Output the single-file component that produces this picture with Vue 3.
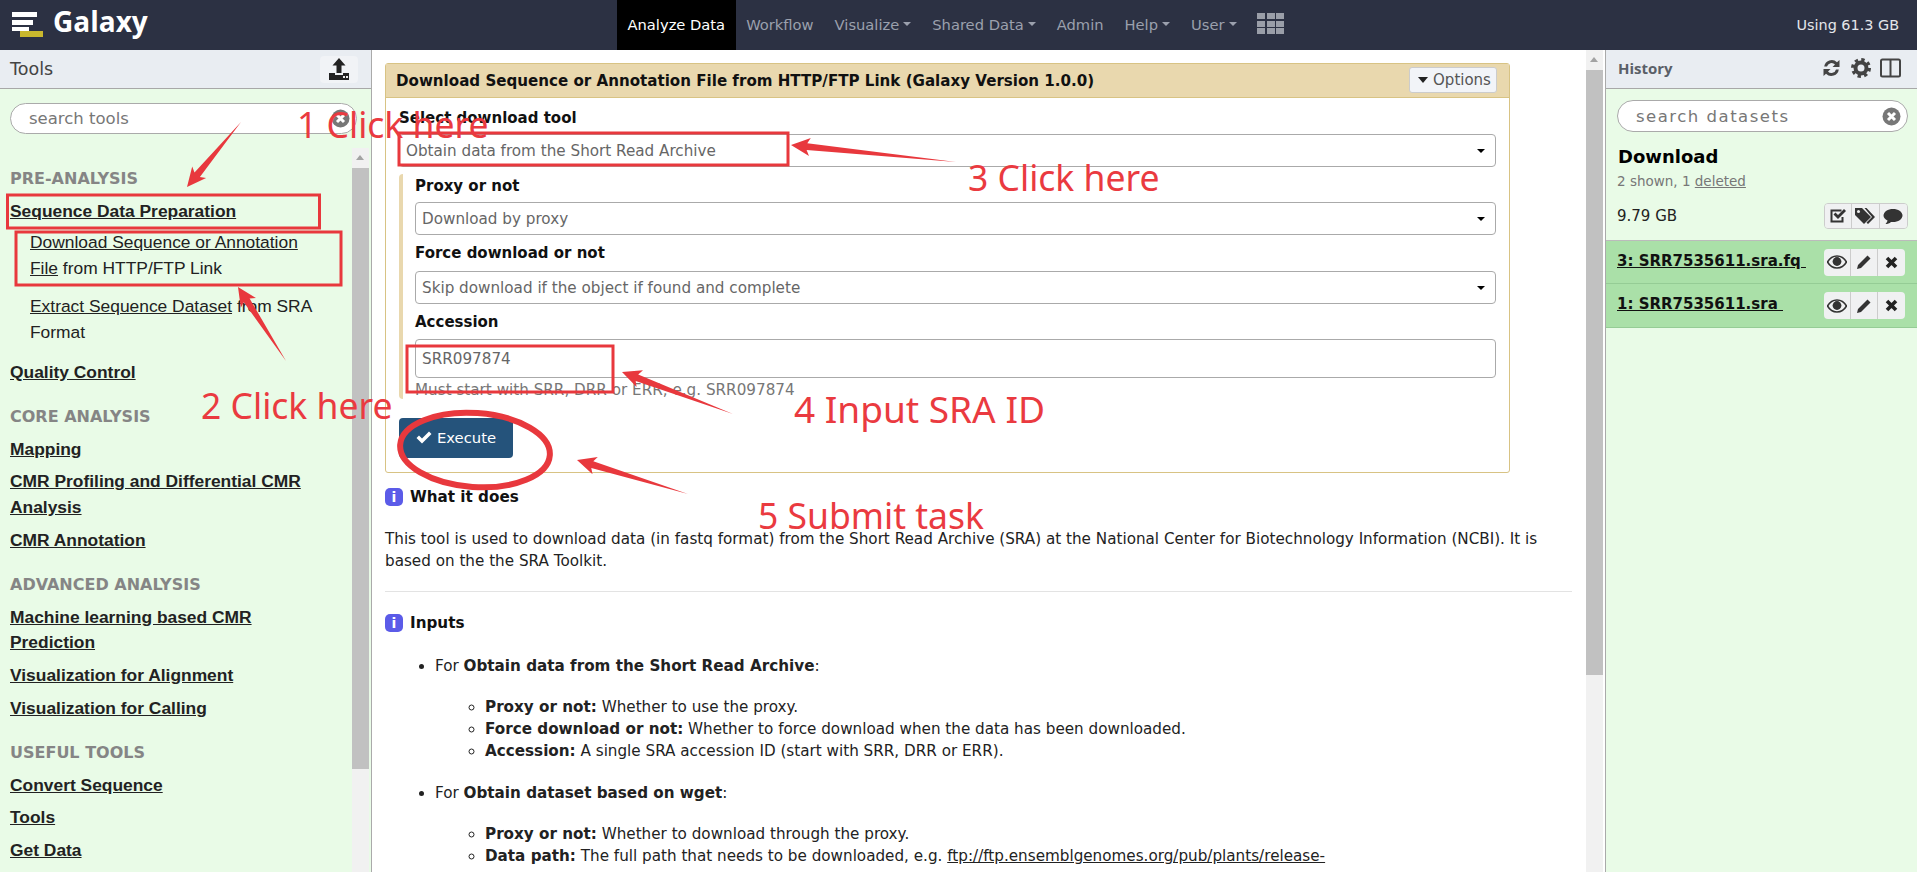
<script setup>
import { computed } from 'vue'

const navItems = [
  { label: 'Analyze Data', active: true },
  { label: 'Workflow' },
  { label: 'Visualize', caret: true },
  { label: 'Shared Data', caret: true },
  { label: 'Admin' },
  { label: 'Help', caret: true },
  { label: 'User', caret: true }
]

const toolGroups = [
  { title: 'PRE-ANALYSIS', items: ['Sequence Data Preparation'], open: true },
  { items: ['Quality Control'] },
  { title: 'CORE ANALYSIS', items: ['Mapping', 'CMR Profiling and Differential CMR Analysis', 'CMR Annotation'] },
  { title: 'ADVANCED ANALYSIS', items: ['Machine learning based CMR Prediction', 'Visualization for Alignment', 'Visualization for Calling'] },
  { title: 'USEFUL TOOLS', items: ['Convert Sequence', 'Tools', 'Get Data'] }
]

const grid = Array.from({ length: 9 }, (_, i) => i)

const marks = [
  { d: [7.5, 195, 312, 33] },
  { d: [16, 232, 325, 53] },
  { d: [399, 133, 389, 32] },
  { d: [407, 346, 206, 46] }
]

const rawArrows = [
  { tip: [187, 187], tail: [241, 122] },
  { tip: [238, 287], tail: [286, 361] },
  { tip: [791, 145], tail: [956, 162] },
  { tip: [622, 372], tail: [733, 414] },
  { tip: [577, 460], tail: [688, 494] }
]

// arrow shape: thin tail widening up to a barbed head
const arrows = computed(() =>
  rawArrows.map(({ tip, tail }) => {
    const dx = tail[0] - tip[0]
    const dy = tail[1] - tip[1]
    const len = Math.hypot(dx, dy)
    const ux = dx / len
    const uy = dy / len
    const at = (along, side) =>
      `${(tip[0] + ux * along - uy * side).toFixed(1)},${(tip[1] + uy * along + ux * side).toFixed(1)}`
    return [at(0, 0), at(19, 9), at(16, 3.5), tail.join(','), at(16, -3.5), at(19, -9)].join(' ')
  })
)

const notes = [
  { text: '1 Click here', cls: 'note-1' },
  { text: '2 Click here', cls: 'note-2' },
  { text: '3 Click here', cls: 'note-3' },
  { text: '4 Input SRA ID', cls: 'note-4' },
  { text: '5 Submit task', cls: 'note-5' }
]
</script>

<template>
  <div class="page">
    <header class="masthead">
      <div class="brand">
        <svg class="logo" width="32" height="26" viewBox="0 0 32 26">
          <rect x="0" y="0" width="25" height="5" fill="#fff" />
          <rect x="0" y="8" width="21" height="5" fill="#fff" />
          <rect x="0" y="15" width="17" height="4" fill="#fff" />
          <rect x="8" y="19" width="23" height="6" fill="#c9b82e" />
        </svg>
        <span class="brand-name">Galaxy</span>
      </div>
      <nav class="nav">
        <a v-for="item in navItems" :key="item.label" class="nav-item" :class="{ active: item.active }">
          {{ item.label }}<i v-if="item.caret" class="caret"></i>
        </a>
        <div class="apps">
          <i v-for="n in grid" :key="n"></i>
        </div>
      </nav>
      <div class="quota">Using 61.3 GB</div>
    </header>

    <div class="main">
      <aside class="tools">
        <div class="panel-head">
          <span class="panel-title">Tools</span>
          <button class="upload">
            <svg width="20" height="22" viewBox="0 0 20 22">
              <path d="M10 0l6.5 7.5H12.5V15h-5V7.500H3.500z" fill="#222" />
              <path d="M0 15h6v2h8v-2h6v7H0z" fill="#222" />
              <rect x="14" y="18" width="2" height="2" fill="#eee" />
              <rect x="17" y="18" width="2" height="2" fill="#eee" />
            </svg>
          </button>
        </div>
        <div class="tool-search">
          <div class="search-box">
            <span>search tools</span>
            <svg class="clear" width="19" height="19" viewBox="0 0 19 19">
              <circle cx="9.500" cy="9.500" r="9" fill="#777" />
              <path d="M6 6l7 7M13 6l-7 7" stroke="#fff" stroke-width="3" />
            </svg>
          </div>
        </div>
        <div class="tool-body">
          <div class="tool-list">
            <section v-for="(group, g) in toolGroups" :key="g" class="group">
              <div v-if="group.title" class="group-title">{{ group.title }}</div>
              <template v-for="item in group.items" :key="item">
                <a class="tool-link">{{ item }}</a>
                <div v-if="group.open" class="sub-list">
                  <div class="sub-item"><u>Download Sequence or Annotation File</u> from HTTP/FTP Link</div>
                  <div class="sub-item"><u>Extract Sequence Dataset</u> from SRA Format</div>
                </div>
              </template>
            </section>
          </div>
          <div class="scrollbar">
            <i class="up"></i>
            <b class="thumb thumb-left"></b>
          </div>
        </div>
      </aside>

      <main class="center">
        <div class="content">
          <div class="card">
            <div class="card-head">
              <span>Download Sequence or Annotation File from HTTP/FTP Link (Galaxy Version 1.0.0)</span>
              <button class="options"><i class="caret big"></i>Options</button>
            </div>
            <div class="card-body">
              <div class="label first">Select download tool</div>
              <div class="select">Obtain data from the Short Read Archive<i class="caret dark"></i></div>
              <div class="nested">
                <div class="label top">Proxy or not</div>
                <div class="select">Download by proxy<i class="caret dark"></i></div>
                <div class="label force">Force download or not</div>
                <div class="select">Skip download if the object if found and complete<i class="caret dark"></i></div>
                <div class="label accession">Accession</div>
                <div class="text-input">SRR097874</div>
                <div class="help">Must start with SRR, DRR or ERR, e.g. SRR097874</div>
              </div>
              <button class="execute">
                <svg width="16" height="13" viewBox="0 0 16 13">
                  <path d="M0.500 7l2.500-2.500 3 3L13 0.500l2.500 2.500L6 12.500z" fill="#fff" />
                </svg>
                Execute
              </button>
            </div>
          </div>

          <div class="help-head"><i class="info">i</i><strong>What it does</strong></div>
          <p class="para">
            This tool is used to download data (in fastq format) from the Short Read Archive (SRA) at the National Center for Biotechnology Information (NCBI). It is based on the the SRA Toolkit.
          </p>
          <hr class="rule" />
          <div class="help-head inputs"><i class="info">i</i><strong>Inputs</strong></div>
          <ul class="bullets">
            <li>
              For <strong>Obtain data from the Short Read Archive</strong>:
              <ul>
                <li><strong>Proxy or not:</strong> Whether to use the proxy.</li>
                <li><strong>Force download or not:</strong> Whether to force download when the data has been downloaded.</li>
                <li><strong>Accession:</strong> A single SRA accession ID (start with SRR, DRR or ERR).</li>
              </ul>
            </li>
            <li>
              For <strong>Obtain dataset based on wget</strong>:
              <ul>
                <li><strong>Proxy or not:</strong> Whether to download through the proxy.</li>
                <li class="nowrap"><strong>Data path:</strong> The full path that needs to be downloaded, e.g. <u>ftp://ftp.ensemblgenomes.org/pub/plants/release-</u></li>
              </ul>
            </li>
          </ul>
        </div>
        <div class="scrollbar center-bar">
          <i class="up"></i>
          <b class="thumb thumb-center"></b>
        </div>
      </main>

      <aside class="history">
        <div class="panel-head hist-head">
          <span class="hist-title">History</span>
          <div class="hist-icons">
            <svg width="21" height="20" viewBox="0 0 21 20">
              <path d="M3.200 8.500A7.500 7.500 0 0 1 16 4.300L18.500 2v7h-7l2.500-2.500A4.700 4.700 0 0 0 6 8.500z" fill="#444" />
              <path d="M17.800 11.500A7.500 7.500 0 0 1 5 15.700L2.500 18v-7h7L7 13.500a4.700 4.700 0 0 0 8 -2z" fill="#444" />
            </svg>
            <svg width="20" height="20" viewBox="0 0 20 20">
              <circle cx="10" cy="10" r="5.500" fill="none" stroke="#444" stroke-width="4" />
              <circle cx="10" cy="10" r="8.300" fill="none" stroke="#444" stroke-width="3.400" stroke-dasharray="3.300 3.220" />
            </svg>
            <svg width="21" height="20" viewBox="0 0 21 20">
              <rect x="1" y="1.500" width="19" height="17" rx="1.500" fill="none" stroke="#444" stroke-width="2" />
              <path d="M10.500 1.500v17" stroke="#444" stroke-width="2" />
            </svg>
          </div>
        </div>
        <div class="hist-body">
          <div class="search-box hist-search">
            <span>search datasets</span>
            <svg class="clear" width="19" height="19" viewBox="0 0 19 19">
              <circle cx="9.500" cy="9.500" r="9" fill="#777" />
              <path d="M6 6l7 7M13 6l-7 7" stroke="#fff" stroke-width="3" />
            </svg>
          </div>
          <div class="hist-name">Download</div>
          <div class="hist-count">2 shown, 1 <u>deleted</u></div>
          <div class="hist-size">
            <span>9.79 GB</span>
            <div class="btn-group wide">
              <button>
                <svg width="18" height="16" viewBox="0 0 18 16">
                  <path d="M13.500 9v4.500h-11v-11h10" fill="none" stroke="#333" stroke-width="2" />
                  <path d="M4.500 6.500l2-2 2.500 2.500 6-6 2 2-8 8z" fill="#333" />
                </svg>
              </button>
              <button>
                <svg width="22" height="18" viewBox="0 0 22 18">
                  <path d="M1 1h7l9 9-7 7-9-9z" fill="#333" />
                  <path d="M10.500 1h2l8.500 9-7 7-1.500-1.500 5.500-5.500z" fill="#333" />
                  <circle cx="4.500" cy="4.500" r="1.500" fill="#eee" />
                </svg>
              </button>
              <button>
                <svg width="20" height="17" viewBox="0 0 20 17">
                  <path d="M10 1c5 0 9.500 2.700 9.500 6.500S15 14 10 14c-.7 0-1.400 0-2-.1C6.500 15.300 4.500 16 2.500 16c1-1 1.800-2.300 2-3.500C2 11.300.500 9.500.500 7.500.500 3.700 5 1 10 1z" fill="#333" />
                </svg>
              </button>
            </div>
          </div>
          <div v-for="name in ['3: SRR7535611.sra.fq ', '1: SRR7535611.sra ']" :key="name" class="dataset">
            <u class="dataset-name">{{ name }}</u>
            <div class="btn-group">
              <button>
                <svg width="20" height="14" viewBox="0 0 20 14">
                  <path d="M10 1c4 0 7.500 2.400 9.500 6-2 3.600-5.500 6-9.500 6S2.500 10.600.500 7C2.500 3.400 6 1 10 1z" fill="none" stroke="#333" stroke-width="1.600" />
                  <circle cx="10" cy="6.500" r="4.400" fill="#333" />
                </svg>
              </button>
              <button>
                <svg width="16" height="16" viewBox="0 0 16 16">
                  <path d="M11.500 1.500l3 3L5 14l-4 1 1-4z" fill="#333" />
                </svg>
              </button>
              <button>
                <svg width="13" height="13" viewBox="0 0 13 13">
                  <path d="M2 2l9 9M11 2l-9 9" stroke="#222" stroke-width="3.600" />
                </svg>
              </button>
            </div>
          </div>
        </div>
      </aside>
    </div>

    <!-- red tutorial marks drawn over the screenshot -->
    <svg class="marks" width="1917" height="872" viewBox="0 0 1917 872">
      <rect
        v-for="(m, i) in marks"
        :key="i"
        :x="m.d[0]"
        :y="m.d[1]"
        :width="m.d[2]"
        :height="m.d[3]"
        fill="none"
        stroke="#e8383d"
        stroke-width="3"
      />
      <polygon v-for="(pts, i) in arrows" :key="'a' + i" :points="pts" fill="#e8383d" />
      <ellipse cx="475" cy="450" rx="75" ry="37" fill="none" stroke="#e8383d" stroke-width="6" transform="rotate(4 475 450)" />
    </svg>
    <div v-for="n in notes" :key="n.cls" class="note" :class="n.cls">{{ n.text }}</div>
  </div>
</template>

<style>
html, body {
  margin: 0;
  background: #fff;
  overflow: hidden;
}
</style>

<style scoped>
.page {
  position: relative;
  width: 1917px;
  height: 872px;
  overflow: hidden;
  font-family: "DejaVu Sans", sans-serif;
  font-size: 15.200px;
  color: #222;
}

button {
  font-family: inherit;
  padding: 0;
}

.masthead {
  height: 50px;
  background: #2c3143;
  display: flex;
  align-items: stretch;
}

.brand {
  width: 617px;
  flex: none;
  display: flex;
  align-items: flex-start;
  padding: 5px 0 0 12px;
  box-sizing: border-box;
}

.logo {
  margin-top: 7px;
  margin-right: 9px;
}

.brand-name {
  color: #fff;
  font-family: "Open Sans", sans-serif;
  font-weight: 700;
  font-size: 28px;
  line-height: 32px;
}

.nav {
  display: flex;
  align-items: stretch;
  flex: 1;
}

.nav-item {
  display: flex;
  align-items: center;
  padding: 0 10.500px 2px;
  color: #9ba0ad;
  font-size: 14.700px;
  white-space: nowrap;
}

.nav-item.active {
  background: #000;
  color: #fff;
}

.caret {
  display: inline-block;
  width: 0;
  height: 0;
  margin-left: 4px;
  border-left: 4px solid transparent;
  border-right: 4px solid transparent;
  border-top: 4px solid currentColor;
}

.apps {
  display: grid;
  grid-template-columns: repeat(3, 8px);
  grid-auto-rows: 6px;
  gap: 1.500px;
  align-self: center;
  margin-left: 10px;
  margin-top: -3px;
}

.apps i {
  background: #9a9ea8;
}

.quota {
  align-self: center;
  padding-right: 18px;
  color: #e4e6ea;
  font-size: 14.400px;
}

.main {
  display: flex;
  height: 822px;
}

.tools {
  width: 372px;
  flex: none;
  border-right: 1px solid #aaa;
  background: #e9fbe7;
  display: flex;
  flex-direction: column;
  box-sizing: border-box;
}

.panel-head {
  height: 39px;
  flex: none;
  box-sizing: border-box;
  background: #e9edf2;
  border-bottom: 1px solid #a8a8a8;
  display: flex;
  align-items: center;
  justify-content: space-between;
  padding: 0 13px 0 10px;
}

.panel-title {
  font-size: 17.500px;
  color: #444;
}

.upload {
  width: 38px;
  height: 27px;
  border: 0;
  border-radius: 4px;
  background: #f1f3f6;
  display: flex;
  align-items: center;
  justify-content: center;
}

.tool-search {
  padding: 14px 14px 14px 10px;
  height: 59px;
  flex: none;
  box-sizing: border-box;
}

.search-box {
  height: 31px;
  box-sizing: border-box;
  border: 1px solid #aaa;
  border-radius: 16px;
  background: #fff;
  display: flex;
  align-items: center;
  justify-content: space-between;
  padding: 0 6px 0 18px;
  color: #777;
  font-size: 16.500px;
}

.tool-body {
  flex: 1;
  display: flex;
  min-height: 0;
}

.tool-list {
  flex: 1;
  padding: 18px 22px 0 10px;
  overflow: hidden;
  font-family: "Liberation Sans", sans-serif;
  font-size: 17.400px;
  line-height: 25.600px;
  color: #222;
}

.group-title {
  font-family: "DejaVu Sans", sans-serif;
  color: #858585;
  font-weight: 700;
  font-size: 16px;
  margin: 19px 0 7px;
}

.group:first-child .group-title {
  margin-top: 0;
}

.tool-link {
  display: block;
  font-weight: 700;
  text-decoration: underline;
  margin-bottom: 7px;
}

.sub-list {
  padding-left: 20px;
  margin-top: -1px;
}

.sub-item {
  margin-bottom: 13px;
}

.sub-item:last-child {
  margin-bottom: 14px;
}

.scrollbar {
  width: 17px;
  flex: none;
  background: #f1f1f1;
  margin-right: 2px;
  position: relative;
  display: flex;
  flex-direction: column;
  align-items: stretch;
}

.scrollbar .up {
  height: 20px;
  flex: none;
  position: relative;
}

.scrollbar .up::after {
  content: "";
  position: absolute;
  left: 4px;
  top: 7px;
  border-left: 4.500px solid transparent;
  border-right: 4.500px solid transparent;
  border-bottom: 5px solid #a3a3a3;
}

.thumb {
  display: block;
  background: #c1c1c1;
}

.thumb-left {
  height: 601px;
}

.center {
  flex: 1;
  display: flex;
  min-width: 0;
}

.content {
  flex: 1;
  min-width: 0;
  padding: 13px 14px 0 13px;
  overflow: hidden;
}

.center-bar {
  margin-right: 2px;
}

.thumb-center {
  height: 605px;
}

.card {
  width: 1125px;
  box-sizing: border-box;
  border: 1px solid #d8c384;
  border-radius: 3px;
}

.card-head {
  height: 34px;
  box-sizing: border-box;
  background: #e9d8ae;
  border-bottom: 1px solid #d8c384;
  display: flex;
  align-items: center;
  justify-content: space-between;
  padding: 0 12px 0 10px;
  font-weight: 700;
  font-size: 15.100px;
  color: #111;
}

.options {
  width: 88px;
  height: 26px;
  border: 1px solid #ccc;
  border-radius: 3px;
  background: #f2f4f8;
  color: #555;
  font-size: 15px;
  font-weight: 400;
  display: flex;
  align-items: center;
  justify-content: center;
  padding-left: 3px;
  margin-top: -2px;
}

.caret.big {
  margin: 0 5px 0 0;
  border-left-width: 5.500px;
  border-right-width: 5.500px;
  border-top-width: 6px;
  color: #222;
}

.card-body {
  padding: 0 13px 14px;
}

.label {
  font-weight: 700;
  font-size: 15px;
  line-height: 20px;
  color: #111;
  margin: 9px 0 6px;
}

.label.first {
  margin-top: 10px;
}

.label.top {
  margin-top: 0;
}

.label.force {
  margin: 8px 0 8px;
}

.label.accession {
  margin-top: 8px;
}

.select, .text-input {
  height: 33px;
  box-sizing: border-box;
  border: 1px solid #aaa;
  border-radius: 4px;
  background: #fff;
  color: #666;
  display: flex;
  align-items: center;
  justify-content: space-between;
  padding: 1px 10px 0 6px;
}

.caret.dark {
  color: #000;
}

.nested {
  margin-top: 7px;
  padding-top: 2px;
  border-left: 4px solid #e9d8ae;
  border-radius: 4px;
  padding-left: 12px;
}

.nested .select, .nested .text-input {
  padding-left: 6px;
}

.text-input {
  height: 39px;
  margin-top: 7px;
}

.help {
  color: #777;
  line-height: 18px;
  margin-top: 3px;
}

.execute {
  margin-top: 18.500px;
  width: 114px;
  height: 40px;
  border: 0;
  border-radius: 4px;
  background: #25537b;
  color: #fff;
  font-size: 14.800px;
  display: flex;
  align-items: center;
  justify-content: center;
  gap: 5px;
}

.help-head {
  display: flex;
  align-items: center;
  gap: 7px;
  margin-top: 15px;
  height: 18px;
  color: #111;
}

.help-head.inputs {
  margin-top: 22px;
}

.info {
  width: 18px;
  height: 18px;
  border-radius: 5px;
  background: #5b5be8;
  color: #fff;
  font-style: normal;
  font-weight: 700;
  font-size: 14px;
  line-height: 18px;
  text-align: center;
}

.para {
  margin: 22px 0 0;
  line-height: 22px;
}

.rule {
  margin: 19px 0 0;
  border: 0;
  border-top: 1px solid #e3e3e3;
}

.bullets {
  margin: 23px 0 0;
  padding-left: 50px;
  line-height: 22px;
}

.bullets > li + li {
  margin-top: 20px;
}

.bullets ul {
  margin: 19px 0 0;
  padding-left: 50px;
  list-style: circle;
}

.nowrap {
  white-space: nowrap;
}

.history {
  width: 312px;
  flex: none;
  box-sizing: border-box;
  border-left: 1px solid #aaa;
  background: #e9fbe7;
  display: flex;
  flex-direction: column;
}

.hist-head {
  padding: 0 16px 3px 12px;
}

.hist-title {
  font-family: "Open Sans", sans-serif;
  font-weight: 700;
  font-size: 15px;
  color: #5a6068;
}

.hist-icons {
  display: flex;
  gap: 9px;
}

.hist-body {
  flex: 1;
}

.hist-search {
  margin: 11px 9px 0 11px;
  height: 32px;
  padding-left: 18px;
  font-size: 16.500px;
  letter-spacing: 1.500px;
}

.hist-name {
  margin: 14px 0 0 12px;
  font-size: 18px;
  font-weight: 700;
  line-height: 22px;
  color: #000;
}

.hist-count {
  margin: 4px 0 0 11px;
  font-size: 13.500px;
  line-height: 18px;
  color: #777;
}

.hist-size {
  display: flex;
  align-items: center;
  justify-content: space-between;
  margin: 13px 9px 0 11px;
  height: 26px;
  font-size: 15px;
}

.btn-group {
  display: flex;
  height: 27px;
  border-radius: 4px;
  overflow: hidden;
}

.btn-group button {
  width: 27px;
  border: 0;
  border-right: 1px solid #ccc;
  background: #f0f1f2;
  display: flex;
  align-items: center;
  justify-content: center;
}

.btn-group button:last-child {
  border-right: 0;
}

.btn-group.wide button {
  width: 27.500px;
}

.btn-group.wide {
  height: 26px;
  border: 1px solid #ccc;
  box-sizing: border-box;
}

.dataset {
  height: 44px;
  box-sizing: border-box;
  background: #aae0a8;
  border-bottom: 1px solid #95cc95;
  display: flex;
  align-items: center;
  justify-content: space-between;
  padding: 0 12px 0 11px;
}

.hist-size + .dataset {
  margin-top: 11px;
  border-top: 1px solid #bbb;
}

.dataset-name {
  font-weight: 700;
  font-size: 15px;
  white-space: pre;
  color: #111;
  margin-top: -3px;
}

.marks {
  position: absolute;
  left: 0;
  top: 0;
  pointer-events: none;
}

.note {
  position: absolute;
  color: #ea3a40;
  font-family: "Noto Sans", sans-serif;
  font-size: 35.500px;
  line-height: 40px;
  white-space: nowrap;
}

.note-1 { left: 297px; top: 104px; }
.note-2 { left: 201px; top: 385px; }
.note-3 { left: 968px; top: 157px; }
.note-4 { left: 794px; top: 389px; font-size: 37px; }
.note-5 { left: 758px; top: 495px; }
</style>
